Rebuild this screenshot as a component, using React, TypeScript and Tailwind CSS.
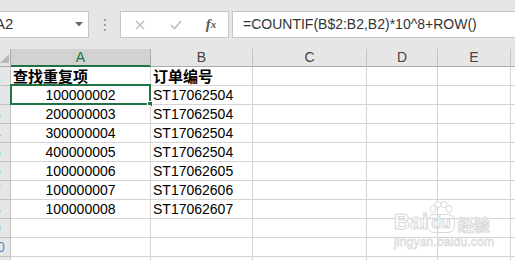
import React from "react";

// COLUMN LAYOUT (widths include the right grid line)
const COLS = [
  { key: "A", width: "w-[140px]" },
  { key: "B", width: "w-[102px]" },
  { key: "C", width: "w-[114px]" },
  { key: "D", width: "w-[71px]" },
  { key: "E", width: "w-[73px]" },
  { key: "F", width: "w-[40px]" },
];

const ROWS: [string, string][] = [
  ["查找重复项", "订单编号"],
  ["100000002", "ST17062504"],
  ["200000003", "ST17062504"],
  ["300000004", "ST17062504"],
  ["400000005", "ST17062504"],
  ["100000006", "ST17062605"],
  ["100000007", "ST17062606"],
  ["100000008", "ST17062607"],
  ["", ""],
  ["", ""],
  ["", ""],
];

const FONT =
  "font-['Liberation_Sans','Noto_Sans_CJK_SC',Arial,sans-serif]";

function FormulaToolbar() {
  return (
    <div className="h-[49px] flex items-start pt-[11px]">
      {/* NAME BOX */}
      <div className="-ml-[20px] w-[109px] h-[27px] bg-white border border-[#c6c6c6] flex items-center pl-[14px] pr-[5px] shrink-0">
        <span className="text-[15px] text-[#333] flex-1">A2</span>
        <svg width="8" height="5" viewBox="0 0 8 5">
          <path d="M0 0 L8 0 L4 4.5 Z" fill="#6b6b6b" />
        </svg>
      </div>

      {/* DRAG DOTS */}
      <div className="w-[31px] h-[27px] flex flex-col items-center justify-center gap-[3px] shrink-0">
        <span className="size-[2px] bg-[#a0a0a0]" />
        <span className="size-[2px] bg-[#a0a0a0]" />
        <span className="size-[2px] bg-[#a0a0a0]" />
      </div>

      {/* CANCEL / ENTER / FX */}
      <div className="w-[109px] h-[27px] bg-white border border-[#c6c6c6] flex items-center shrink-0">
        <div className="w-[37px] flex justify-center">
          <svg width="10" height="10" viewBox="0 0 10 10">
            <path d="M1 1 L9 9 M9 1 L1 9" stroke="#bcbcbc" strokeWidth="1.4" />
          </svg>
        </div>
        <div className="w-[36px] flex justify-center">
          <svg width="12" height="10" viewBox="0 0 12 10">
            <path d="M1 5 L4.5 8.5 L11 1" stroke="#bcbcbc" strokeWidth="1.6" fill="none" />
          </svg>
        </div>
        <div className="flex-1 flex justify-center text-[#5a5a5a] font-['Liberation_Serif',serif] italic">
          <span className="text-[15px] font-bold">f</span>
          <span className="text-[11px] font-bold mt-[3px]">x</span>
        </div>
      </div>

      {/* FORMULA INPUT */}
      <div className="ml-[3px] flex-1 h-[27px] bg-white border border-r-0 border-[#c6c6c6] flex items-center pl-[10px]">
        <span className="text-[14px] text-[#333] whitespace-nowrap">
          =COUNTIF(B$2:B2,B2)*10^8+ROW()
        </span>
      </div>
    </div>
  );
}

function HeaderRow() {
  return (
    <div className="flex h-[18px]">
      <div className="w-[11px] shrink-0 border-r border-b border-[#ababab] bg-[#e6e6e6] flex items-end justify-start pb-[3px]">
        <svg width="9" height="9" viewBox="0 0 9 9">
          <path d="M9 0 L9 9 L0 9 Z" fill="#b8b8b8" />
        </svg>
      </div>
      {COLS.map((c) =>
        c.key === "A" ? (
          <div
            key={c.key}
            className={`${c.width} shrink-0 bg-[#d2d2d2] border-r border-[#ababab] border-b-2 border-b-[#217346] flex items-center justify-center text-[14px] text-[#217346]`}
          >
            {c.key}
          </div>
        ) : (
          <div
            key={c.key}
            className={`${c.width} shrink-0 bg-[#e6e6e6] border-r border-b border-[#c3c3c3] border-b-[#ababab] flex items-center justify-center text-[14px] text-[#444]`}
          >
            {c.key}
          </div>
        )
      )}
    </div>
  );
}

function DataRow({ index, a, b }: { index: number; a: string; b: string }) {
  const isTitle = index === 1;
  const isActive = index === 2;
  return (
    <div className="flex h-[19px]">
      {/* ROW NUMBER (mostly clipped) */}
      <div className="w-[11px] shrink-0 bg-[#e6e6e6] border-r border-b border-[#c3c3c3] overflow-hidden flex justify-end items-center">
        <span className="w-[24px] shrink-0 mr-[1px] text-center text-[14px] text-[#5b8fc7]">
          {index}
        </span>
      </div>

      {/* COLUMN A */}
      <div
        className={`w-[140px] shrink-0 border-r border-b border-[#d4d4d4] bg-white flex items-center relative ${
          isTitle ? "justify-start pl-[2px]" : "justify-center"
        }`}
      >
        {isTitle ? (
          <span className="text-[15px] font-bold text-black leading-none">{a}</span>
        ) : (
          <span className="text-[14px] text-black">{a}</span>
        )}
        {isActive && (
          <>
            <div className="absolute -left-[1px] -top-[2px] -right-[1px] -bottom-[1px] border-2 border-[#217346]" />
            <div className="absolute -right-[3px] -bottom-[3px] size-[6px] bg-[#217346] border border-white" />
          </>
        )}
      </div>

      {/* COLUMN B */}
      <div className="w-[102px] shrink-0 border-r border-b border-[#d4d4d4] bg-white flex items-center pl-[2px]">
        {isTitle ? (
          <span className="text-[15px] font-bold text-black leading-none">{b}</span>
        ) : (
          <span className="text-[14px] text-black">{b}</span>
        )}
      </div>

      {/* EMPTY COLUMNS C..F */}
      <div className="w-[114px] shrink-0 border-r border-b border-[#d4d4d4] bg-white" />
      <div className="w-[71px] shrink-0 border-r border-b border-[#d4d4d4] bg-white" />
      <div className="w-[73px] shrink-0 border-r border-b border-[#d4d4d4] bg-white" />
      <div className="w-[40px] shrink-0 border-b border-[#d4d4d4] bg-white" />
    </div>
  );
}

function Watermark() {
  const stroke = "[-webkit-text-stroke:1px_#d9d9d9]";
  return (
    <div className="absolute left-[394px] top-[202px] flex flex-col items-start pointer-events-none">
      <div className="flex items-end h-[31px]">
        <span className={`text-[22px] font-bold text-white leading-none font-['Liberation_Sans',sans-serif] ${stroke}`}>
          Bai
        </span>
        <div className="flex flex-col items-center -ml-[1px]">
          <svg width="26" height="13" viewBox="0 0 26 13">
            <g fill="white" stroke="#d9d9d9" strokeWidth="1">
              <ellipse cx="5" cy="8" rx="3" ry="3.5" />
              <ellipse cx="10" cy="3.5" rx="3" ry="3" />
              <ellipse cx="16" cy="3.5" rx="3" ry="3" />
              <ellipse cx="21" cy="8" rx="3" ry="3.5" />
            </g>
          </svg>
          <span
            className={`text-[16px] font-bold text-white leading-none px-[3px] pb-[1px] rounded-[7px] border border-[#d9d9d9] font-['Liberation_Sans',sans-serif] ${stroke}`}
          >
            du
          </span>
        </div>
        <span className={`ml-[3px] mb-[1px] text-[16px] font-bold text-white leading-none font-['Noto_Sans_CJK_SC',sans-serif] ${stroke}`}>
          经验
        </span>
      </div>
      <span className="mt-[3px] text-[12px] text-white leading-none tracking-[0.2px] font-['Liberation_Sans',sans-serif] [-webkit-text-stroke:0.6px_#d4d4d4]">
        jingyan.baidu.com
      </span>
    </div>
  );
}

export default function App() {
  return (
    <div className={`w-[515px] h-[260px] overflow-hidden bg-[#e6e6e6] relative ${FONT}`}>
      <FormulaToolbar />
      <HeaderRow />
      {ROWS.map(([a, b], i) => (
        <DataRow key={i} index={i + 1} a={a} b={b} />
      ))}
      <Watermark />
    </div>
  );
}
